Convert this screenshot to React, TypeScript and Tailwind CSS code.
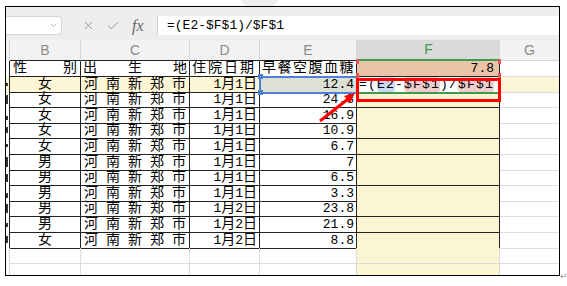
import { X, Check, ChevronDown } from "lucide-react";

const COLS = "grid grid-cols-[4px_71px_109px_70px_97px_143px_59px] h-[15.6px] shrink-0";

const data = [
    ["女", "1月1日", "12.4"],
    ["女", "1月1日", "24.8"],
    ["女", "1月1日", "16.9"],
    ["女", "1月1日", "10.9"],
    ["女", "1月1日", "6.7"],
    ["男", "1月1日", "7"],
    ["男", "1月1日", "6.5"],
    ["男", "1月1日", "3.3"],
    ["男", "1月2日", "23.8"],
    ["男", "1月2日", "21.9"],
    ["女", "1月2日", "8.8"],
];

// bits of column A that peek out at the left edge
const marks = [
    "h-[3px] mt-[6px]",
    "h-[9px] mt-[3px]",
    "h-[4px] mt-[8px]",
    "h-[6px] mt-[4px]",
    "h-[3px] mt-[5px]",
    "h-[10px] mt-[2px]",
    "h-[8px] mt-[4px]",
    "h-[5px] mt-[7px]",
    "h-[9px] mt-[3px]",
    "h-[4px] mt-[6px]",
    "h-[7px] mt-[3px]",
];

function DataRow({ idx, row }: { idx: number; row: string[] }) {
    const active = idx === 0;
    const yellow = active ? "bg-[#fdf6d6]" : "";
    return (
        <div className={COLS}>
            <div className={`flex justify-end items-start pr-[1px] border-r border-r-[#222] ${yellow}`}>
                <div className={`w-[2px] bg-[#333] ${marks[idx]}`} />
            </div>
            <div className={`flex items-center justify-center border-r border-b border-[#222] ${yellow}`}>{row[0]}</div>
            <div className={`flex items-center justify-between px-[3px] border-r border-b border-[#222] ${yellow}`}>
                <span>河</span><span>南</span><span>新</span><span>郑</span><span>市</span>
            </div>
            <div className={`flex items-center justify-end pr-[2px] border-r border-b border-[#222] ${yellow}`}>
                <span className="font-['Liberation_Mono'] text-[13px]">{row[1][0]}</span>月
                <span className="font-['Liberation_Mono'] text-[13px]">{row[1][2]}</span>日
            </div>
            <div className={`flex items-center justify-end pr-[2px] text-[13px] border-r border-b border-[#222] ${active ? "bg-[#dde0d5]" : ""}`}>
                {row[2]}
            </div>
            {active ? (
                <div className="flex items-center pl-[2px] text-[13px] tracking-[1.2px] whitespace-nowrap border-r border-b border-[#222] bg-white">
                    =(<span className="bg-[#c9d7f2] rounded-[3px]">E2</span>-<span className="bg-[#f1cccc] rounded-[3px]">$F$1</span>)/<span className="bg-[#f1cccc] rounded-[3px]">$F$1</span>
                </div>
            ) : (
                <div className="border-r border-b border-[#222] bg-[#fbf6d1]" />
            )}
            <div className={`border-b border-[#dcdcdc] ${yellow}`} />
        </div>
    );
}

function EmptyRow() {
    return (
        <div className={COLS}>
            <div className="border-r border-[#d4d4d4]" />
            <div className="border-r border-b border-[#dcdcdc]" />
            <div className="border-r border-b border-[#dcdcdc]" />
            <div className="border-r border-b border-[#dcdcdc]" />
            <div className="border-r border-b border-[#dcdcdc]" />
            <div className="border-r border-b border-[#dcdcdc] bg-[#fbf6d1]" />
            <div className="border-b border-[#dcdcdc]" />
        </div>
    );
}

export default function App() {
    return (
        <div className="relative w-[567px] h-[286px] bg-white overflow-hidden font-['Liberation_Mono','Noto_Sans_CJK_SC',monospace] text-[14px] leading-[15px] text-black">
            <div className="absolute left-[240px] top-[-16px] w-[38px] h-[24px] rounded-full bg-[#eeeeee]" />

            <div className="relative pl-[5px] pt-[6px]">
                <div className="w-[555px] h-[270px] border border-black bg-white flex flex-col overflow-hidden">
                    {/* formula bar */}
                    <div className="h-[33px] shrink-0 bg-[#eeeeee] flex pt-[9px]">
                        <div className="w-[56px] h-[19px] bg-white border border-l-0 border-[#d6d6d6] rounded-r-[4px] flex items-center justify-end pr-[3px]">
                            <ChevronDown className="w-[9px] h-[9px] text-[#9a9a9a]" strokeWidth={2} />
                        </div>
                        <div className="w-[95px] h-[19px] flex items-center">
                            <X className="ml-[20px] w-[13px] h-[13px] text-[#777]" strokeWidth={1.3} />
                            <Check className="ml-[11px] w-[14px] h-[14px] text-[#777]" strokeWidth={1.3} />
                            <span className="ml-[12px] font-['Liberation_Serif'] italic text-[16px] text-[#666]">fx</span>
                        </div>
                        <div className="flex-1 h-[19px] bg-white border-l border-[#cfcfcf] pl-[9px] flex items-center text-[13px]">
                            =(E2-$F$1)/$F$1
                        </div>
                    </div>

                    {/* column headers */}
                    <div className="grid grid-cols-[4px_71px_109px_70px_97px_143px_59px] h-[21px] shrink-0 bg-[#f2f2f2] font-['Liberation_Sans'] text-[14px] text-[#8a8a8a]">
                        <div className="border-r border-[#d6d6d6]" />
                        <div className="flex items-center justify-center border-r border-r-[#d6d6d6] border-b border-b-[#222]">B</div>
                        <div className="flex items-center justify-center border-r border-r-[#d6d6d6] border-b border-b-[#222]">C</div>
                        <div className="flex items-center justify-center border-r border-r-[#d6d6d6] border-b border-b-[#222]">D</div>
                        <div className="flex items-center justify-center border-r border-r-[#d6d6d6] border-b border-b-[#222]">E</div>
                        <div className="flex items-center justify-center bg-[#dadada] text-[#3f9b4a] border-b-2 border-[#3f9b4a]">F</div>
                        <div className="flex items-center justify-center border-b border-[#d6d6d6]">G</div>
                    </div>

                    {/* row 1 */}
                    <div className={COLS}>
                        <div className="border-r border-r-[#222]" />
                        <div className="flex items-center justify-between px-[3px] border-r border-b border-[#222]">
                            <span>性</span><span>别</span>
                        </div>
                        <div className="flex items-center justify-between px-[2px] border-r border-b border-[#222]">
                            <span>出</span><span>生</span><span>地</span>
                        </div>
                        <div className="flex items-center pl-[2px] tracking-[2px] border-r border-b border-[#222]">住院日期</div>
                        <div className="flex items-center pl-[2px] tracking-[1.5px] whitespace-nowrap border-r border-b border-[#222]">早餐空腹血糖</div>
                        <div className="flex items-center justify-end pr-[5px] text-[13px] bg-[#e9c4a8] border-r border-b border-[#222]">7.8</div>
                        <div className="border-b border-[#dcdcdc]" />
                    </div>

                    {data.map((row, i) => (
                        <DataRow key={i} idx={i} row={row} />
                    ))}
                    <EmptyRow />
                    <EmptyRow />
                </div>
            </div>

            {/* E2 reference highlight */}
            <div className="absolute left-[259px] top-[76px] w-[99px] h-[18px] border-2 border-[#4f80d8]" />
            <div className="absolute left-[258px] top-[74px] w-[5px] h-[5px] bg-[#4f80d8]" />
            <div className="absolute left-[258px] top-[90px] w-[5px] h-[5px] bg-[#4f80d8]" />

            {/* F1 reference corners */}
            <div className="absolute left-[356px] top-[59px] w-[3px] h-[5px] bg-[#e05a5a]" />
            <div className="absolute left-[498px] top-[59px] w-[3px] h-[5px] bg-[#e05a5a]" />
            <div className="absolute left-[356px] top-[73px] w-[3px] h-[5px] bg-[#e05a5a]" />
            <div className="absolute left-[498px] top-[73px] w-[3px] h-[5px] bg-[#e05a5a]" />

            {/* active cell border */}
            <div className="absolute left-[358px] top-[92px] w-[141px] h-[2px] bg-[#3f9b4a]" />

            {/* annotation */}
            <div className="absolute left-[356px] top-[78px] w-[145px] h-[24px] border-[3px] border-[#ff0000]" />
            <svg className="absolute left-[315px] top-[88px]" width="45" height="38" viewBox="0 0 45 38">
                <line x1="5" y1="33" x2="33" y2="11" stroke="#ff0000" strokeWidth="3" />
                <polygon points="40,5 35,15 29,8" fill="#ff0000" />
            </svg>

            <span className="absolute left-[560px] top-[269px] text-[9px] text-[#999] font-['DejaVu_Sans']">↵</span>
        </div>
    );
}
